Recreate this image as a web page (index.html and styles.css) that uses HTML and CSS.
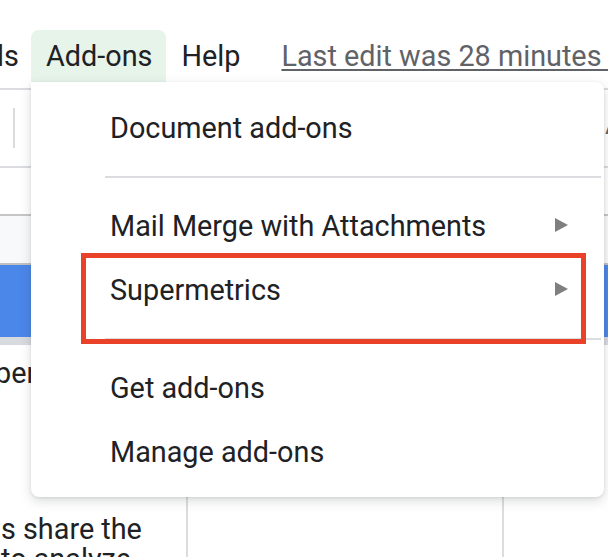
FILE: index.html
```html
<!DOCTYPE html>
<html>
<head>
<meta charset="utf-8">
<link rel="stylesheet" href="styles.css">
</head>
<body>
<div class="page">
  <nav class="menubar">
    <div class="mb-cut"><span>Tools</span></div>
    <div class="mb-item active">Add-ons</div>
    <div class="mb-item">Help</div>
    <div class="last-edit">Last edit was 28 minutes ago</div>
  </nav>
  <div class="toolbar">
    <div class="tb-divider"></div>
    <div class="tb-glyph">A</div>
  </div>
  <div class="ruler"></div>
  <div class="sheet-head"></div>
  <div class="sheet-blue"></div>
  <div class="sheet-strip"></div>
  <div class="doc-table">
    <div class="cell first">
      <p class="cell-text top">per</p>
      <p class="cell-text bottom">s share the<br>to analyze</p>
    </div>
    <div class="cell"></div>
    <div class="cell"></div>
  </div>

  <div class="dropdown">
    <div class="dd-item">Document add-ons</div>
    <div class="dd-sep"></div>
    <div class="dd-item">Mail Merge with Attachments
      <svg class="arrow" width="13" height="14" viewBox="0 0 13 14"><polygon points="0,0 13,7 0,14" fill="#7f7f7f"/></svg>
    </div>
    <div class="dd-item highlighted">Supermetrics
      <svg class="arrow" width="13" height="14" viewBox="0 0 13 14"><polygon points="0,0 13,7 0,14" fill="#7f7f7f"/></svg>
    </div>
    <div class="dd-sep"></div>
    <div class="dd-item">Get add-ons</div>
    <div class="dd-item">Manage add-ons</div>
  </div>
</div>
</body>
</html>
```
FILE: styles.css
```css
* { box-sizing: border-box; }
html, body {
  margin: 0;
  padding: 0;
  background: #ffffff;
}
body {
  width: 608px;
  height: 557px;
  overflow: hidden;
  font-family: Roboto, "Noto Sans", "Liberation Sans", sans-serif;
  font-size: 28.8px;
  color: #202124;
}
.page {
  position: relative;
  width: 608px;
  height: 557px;
  overflow: hidden;
}
.menubar {
  display: flex;
  align-items: stretch;
  height: 52px;
  margin-top: 30px;
  white-space: nowrap;
  line-height: 52px;
}
.menubar > * {
  flex-shrink: 0;
}
.mb-cut {
  width: 19px;
  margin-right: 12px;
  overflow: hidden;
  display: flex;
  justify-content: flex-end;
}
.mb-item {
  padding: 0 14px 0 15px;
}
.mb-item.active {
  background: #e6f4ea;
  border-radius: 8px 8px 0 0;
  padding-right: 14px;
}
.last-edit {
  margin-left: 27px;
  color: #5f6368;
  text-decoration: underline;
  text-decoration-thickness: 2px;
  text-underline-offset: 3px;
}
.toolbar {
  margin-top: 6px;
  height: 80px;
  border-top: 2px solid #dadce0;
  border-bottom: 2px solid #dadce0;
  display: flex;
  align-items: flex-start;
  padding-left: 13px;
}
.tb-divider {
  width: 2px;
  height: 40px;
  margin-top: 18px;
  background: #dadce0;
}
.tb-glyph {
  margin-left: auto;
  margin-right: -14px;
  margin-top: 20px;
  font-size: 26px;
  line-height: 30px;
  color: #5f6368;
}
.ruler {
  height: 48px;
  border-bottom: 2px solid #c6c6c6;
}
.sheet-head {
  height: 49px;
  background: #f8f9fa;
  border-bottom: 2px solid #c0c0c0;
}
.sheet-blue {
  height: 72px;
  background: #4b86e9;
}
.sheet-strip {
  height: 8px;
  background: #d7dadf;
}
.doc-table {
  display: grid;
  grid-template-columns: 186px 316px 1fr;
  height: 212px;
}
.cell {
  border-left: 2px solid #dadce0;
}
.cell.first {
  border-left: none;
}
.cell-text {
  margin: 0;
  white-space: nowrap;
  line-height: 30px;
}
.cell-text.top {
  margin-top: 13px;
  margin-left: -5px;
}
.cell-text.bottom {
  margin-top: 126px;
  padding-left: 1px;
}
.dropdown {
  position: absolute;
  left: 31px;
  top: 82px;
  width: 573px;
  height: 415px;
  background: #ffffff;
  border-radius: 0 8px 8px 8px;
  box-shadow: 0 4px 12px rgba(60, 64, 67, 0.18), 0 1px 3px rgba(60, 64, 67, 0.12);
  padding: 14px 0 12px 0;
  line-height: 64px;
  white-space: nowrap;
}
.dd-item {
  position: relative;
  height: 64px;
  padding-left: 79px;
  padding-right: 36px;
  display: flex;
  align-items: center;
}
.dd-item .arrow {
  margin-left: auto;
  margin-top: -2px;
}
.dd-sep {
  height: 2px;
  background: #dadce0;
  margin: 16px 3px 16px 74px;
}
.dd-item.highlighted::after {
  content: "";
  position: absolute;
  left: 50px;
  right: 18px;
  top: -5px;
  bottom: -22px;
  border: 5px solid #ea4129;
}
```
